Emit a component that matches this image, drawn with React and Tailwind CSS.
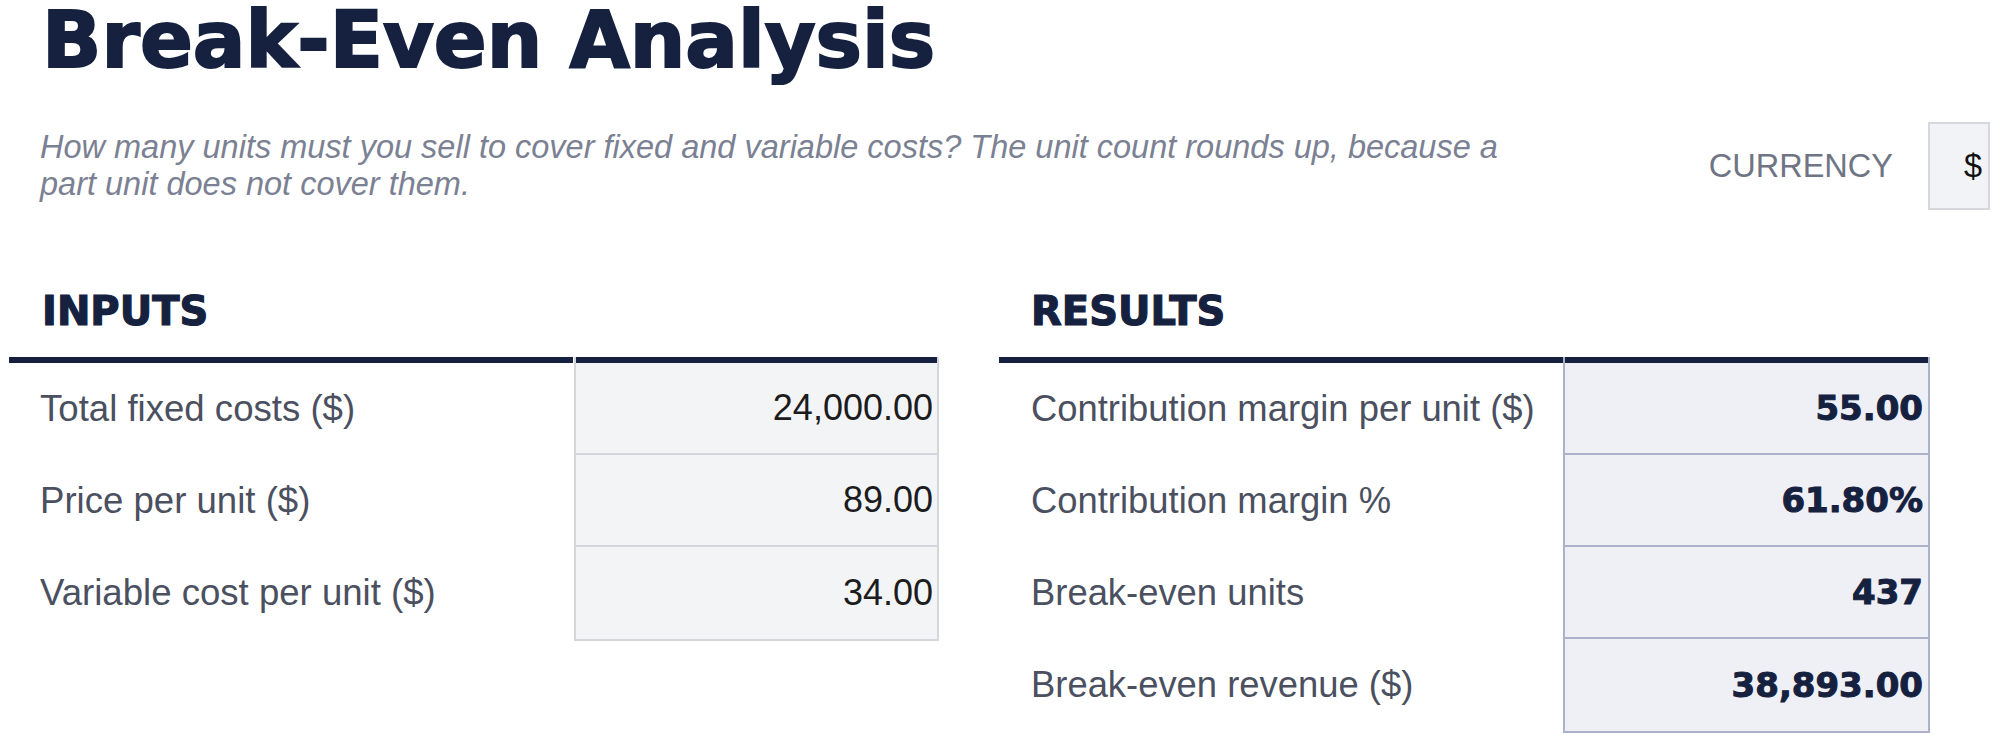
export default function App() {
  const inputs = [
    ["Total fixed costs ($)", "24,000.00"],
    ["Price per unit ($)", "89.00"],
    ["Variable cost per unit ($)", "34.00"],
  ];
  const results = [
    ["Contribution margin per unit ($)", "55.00"],
    ["Contribution margin %", "61.80%"],
    ["Break-even units", "437"],
    ["Break-even revenue ($)", "38,893.00"],
  ];
  return (
    <div className="w-[2000px] h-[742px] overflow-hidden bg-white pl-[40px] pr-[10px] font-['Liberation_Sans',Arial,sans-serif]">
      <h1 className="pt-[1px] ml-[2px] font-['DejaVu_Sans',sans-serif] font-bold text-[78px] leading-[78px] text-[#15213f] whitespace-nowrap [-webkit-text-stroke:2px_#15213f]">
        Break-Even Analysis
      </h1>
      <div className="mt-[43px] flex items-center justify-between h-[88px]">
        <p className="w-[1480px] italic text-[32.5px] leading-[37px] text-[#7b8193]">
          How many units must you sell to cover fixed and variable costs? The unit count rounds up, because a part unit does not cover them.
        </p>
        <div className="flex items-center gap-[35px]">
          <span className="text-[32.5px] leading-[37px] text-[#6f7585]">CURRENCY</span>
          <div className="w-[62px] h-[88px] border-2 border-[#d6d8de] bg-[#f2f3f6] flex items-center justify-end pr-[6px] text-[32.5px] text-[#111]">
            $
          </div>
        </div>
      </div>
      <div className="mt-[81px] -ml-[31px] flex gap-[60px]">
        <section className="w-[930px]">
          <h2 className="pl-[33px] h-[40px] font-['DejaVu_Sans',sans-serif] font-bold text-[40px] leading-[40px] text-[#15213f] [-webkit-text-stroke:1.2px_#15213f]">
            INPUTS
          </h2>
          <div className="mt-[26px] grid grid-cols-[564px_366px]">
            <div>
              <div className="h-[6px] bg-[#15213f]" />
              {inputs.map(([l]) => (
                <div key={l} className="h-[92px] flex items-center pl-[31px] text-[36.6px] text-[#4b5060]">
                  {l}
                </div>
              ))}
            </div>
            <div className="ml-[1px] border-x-2 border-b-2 border-[#d4d6dc] bg-[#f3f4f6]">
              <div className="h-[6px] bg-[#15213f]" />
              {inputs.map(([l, v], i) => (
                <div
                  key={l}
                  className={`h-[92px] flex items-center justify-end pr-[4px] text-[36px] text-[#1c1c1e] ${i < inputs.length - 1 ? "border-b-2 border-[#d4d6dc]" : ""}`}
                >
                  {v}
                </div>
              ))}
            </div>
          </div>
        </section>
        <section className="w-[931px]">
          <h2 className="pl-[32px] h-[40px] font-['DejaVu_Sans',sans-serif] font-bold text-[40px] leading-[40px] text-[#15213f] [-webkit-text-stroke:1.2px_#15213f]">
            RESULTS
          </h2>
          <div className="mt-[26px] grid grid-cols-[564px_367px]">
            <div>
              <div className="h-[6px] bg-[#15213f]" />
              {results.map(([l]) => (
                <div key={l} className="h-[92px] flex items-center pl-[32px] text-[36.4px] text-[#4b5060]">
                  {l}
                </div>
              ))}
            </div>
            <div className="border-x-2 border-b-2 border-[#aab1c8] bg-[#eef0f6]">
              <div className="h-[6px] bg-[#15213f]" />
              {results.map(([l, v], i) => (
                <div
                  key={l}
                  className={`h-[92px] flex items-center justify-end pr-[5px] font-['DejaVu_Sans',sans-serif] font-bold text-[34px] text-[#15213f] [-webkit-text-stroke:1px_#15213f] ${i < results.length - 1 ? "border-b-2 border-[#aab1c8]" : ""}`}
                >
                  {v}
                </div>
              ))}
            </div>
          </div>
        </section>
      </div>
    </div>
  );
}
